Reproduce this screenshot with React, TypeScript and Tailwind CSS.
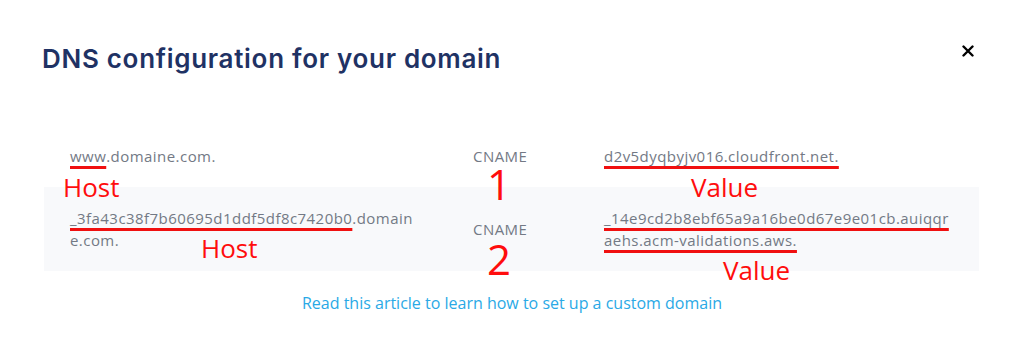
import React from "react";

const redFont = { fontFamily: "'Open Sans', 'Noto Sans', sans-serif" };

const Label = ({ className, children }: { className: string; children: React.ReactNode }) => (
  <span className={"absolute text-[#ff0d0d] leading-none tracking-normal pointer-events-none " + className} style={redFont}>
    {children}
  </span>
);

const Mark = ({ children }: { children: React.ReactNode }) => (
  <span className="underline decoration-[#f01010] decoration-[3px] underline-offset-[4px] [text-decoration-skip-ink:none]">{children}</span>
);

export default function App() {
  const cell = "relative text-[15px] leading-[22px] tracking-[0.45px] text-[#737985] break-all";
  const row = "grid grid-cols-[403px_131px_350px] items-center pl-[26px] py-5";
  return (
    <div className="w-[1024px] h-[358px] bg-white overflow-hidden" style={{ fontFamily: "'Open Sans', 'Noto Sans', sans-serif" }}>
      <div className="flex items-start justify-between pl-[42px] pr-[50px] pt-[43px]">
        <h1 className="text-[26px] leading-8 font-semibold text-[#1f3264] tracking-[0.7px]" style={{ fontFamily: "Inter, sans-serif" }}>
          DNS configuration for your domain
        </h1>
        <button className="mt-[2px] w-3 h-3 text-black">
          <svg viewBox="0 0 12 12" width="12" height="12">
            <path d="M1.5 1.5 L10.5 10.5 M10.5 1.5 L1.5 10.5" stroke="currentColor" strokeWidth="2.4" strokeLinecap="round" />
          </svg>
        </button>
      </div>

      <div className="mx-[44px] mt-[50px] w-[935px]">
        <div className={row}>
          <div className={cell}>
            <Mark>www</Mark>.domaine.com.
            <Label className="left-[-7px] top-[29px] text-[26px]">Host</Label>
          </div>
          <div className={cell + " text-[#7c828d]"}>
            CNAME
            <Label className="left-[14px] top-[18px] text-[42px]">1</Label>
          </div>
          <div className={cell}>
            <Mark>d2v5dyqbyjv016.cloudfront.net.</Mark>
            <Label className="left-[87px] top-[29px] text-[26px]">Value</Label>
          </div>
        </div>
        <div className={row + " bg-[#f8f9fb]"}>
          <div className={cell + " w-[346px]"}>
            <Mark>_3fa43c38f7b60695d1ddf5df8c7420b0</Mark>.domaine.com.
            <Label className="left-[131px] top-[28px] text-[26px]">Host</Label>
          </div>
          <div className={cell + " text-[#7c828d]"}>
            CNAME
            <Label className="left-[14px] top-[20px] text-[42px]">2</Label>
          </div>
          <div className={cell + " w-[347px]"}>
            <Mark>_14e9cd2b8ebf65a9a16be0d67e9e01cb.auiqqraehs.acm-validations.aws.</Mark>
            <Label className="left-[119px] top-[50px] text-[26px]">Value</Label>
          </div>
        </div>
      </div>

      <div className="mt-5 text-center">
        <a className="text-[16px] leading-5 text-[#2aa9e6] cursor-pointer">Read this article to learn how to set up a custom domain</a>
      </div>
    </div>
  );
}
